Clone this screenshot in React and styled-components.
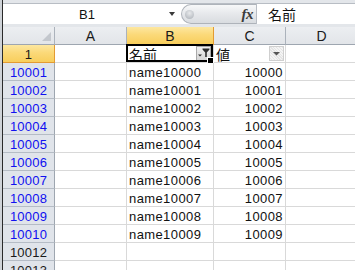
import React from 'react';
import styled, { createGlobalStyle } from 'styled-components';

const Global = createGlobalStyle`
  html, body { margin: 0; padding: 0; background: #fff; }
  body { font-family: "Liberation Sans", Arial, "Noto Sans CJK JP", sans-serif; }
`;

const Frame = styled.div`
  width: 355px;
  height: 270px;
  overflow: hidden;
  box-sizing: border-box;
  border-left: 2px solid #cfd3d8;
  display: flex;
`;

const Window = styled.div`
  flex: 1;
  min-width: 0;
  border-left: 1px solid #2a2a2a;
  display: flex;
  flex-direction: column;
  background: #fff;
`;

const FormulaBar = styled.div`
  height: 28px;
  box-sizing: border-box;
  padding: 3px 0 3px 0;
  background: #e3e6ea;
  display: flex;
`;

const NameBox = styled.div`
  width: 178px;
  box-sizing: border-box;
  background: #fff;
  border-top: 1px solid #b8bdc4;
  display: flex;
  align-items: center;
`;

const NameText = styled.div`
  flex: 1;
  text-align: center;
  font-size: 13px;
  color: #111;
  padding-left: 2px;
`;

const NameArrow = styled.div`
  width: 0;
  height: 0;
  border-left: 3.5px solid transparent;
  border-right: 3.5px solid transparent;
  border-top: 4px solid #3a3a3a;
  margin-right: 6px;
`;

const PillArea = styled.div`
  width: 75px;
  box-sizing: border-box;
  border-top: 1px solid #b8bdc4;
  background: #fff;
  display: flex;
`;

const Pill = styled.div`
  flex: 1;
  box-sizing: border-box;
  border: 1px solid #aeb3ba;
  border-right: none;
  border-radius: 11px 0 0 11px;
  background: linear-gradient(to bottom, #f7f8f9 0%, #e6e8eb 50%, #d9dce0 100%);
  display: flex;
  align-items: center;
  padding-left: 3px;
  padding-right: 3px;
`;

const Knob = styled.div`
  width: 9px;
  height: 9px;
  border-radius: 50%;
  background: radial-gradient(circle at 50% 35%, #e8eaec 0%, #c2c6cb 60%, #a9aeb5 100%);
`;

const Fx = styled.div`
  margin-left: auto;
  font-family: "Liberation Serif", "Times New Roman", serif;
  font-style: italic;
  font-weight: bold;
  font-size: 15px;
  color: #3b3b3b;
  letter-spacing: -0.5px;
  line-height: 1;
`;

const FormulaInput = styled.div`
  flex: 1;
  box-sizing: border-box;
  background: #fff;
  border-top: 1px solid #b8bdc4;
  border-left: 1px solid #b8bdc4;
  padding-left: 11px;
  display: flex;
  align-items: center;
  font-family: "Noto Sans CJK JP", "Liberation Sans", sans-serif;
  font-size: 14px;
  color: #111;
`;

const Sheet = styled.div`
  display: grid;
  grid-template-columns: 52px 72px 87px 72px 72px;
  grid-auto-rows: 18px;
`;

const Cell = styled.div`
  position: relative;
  box-sizing: border-box;
  border-right: 1px solid #d9d9d9;
  border-bottom: 1px solid #d9d9d9;
  display: flex;
  align-items: flex-end;
  justify-content: ${p => (p.$align === 'right' ? 'flex-end' : 'flex-start')};
  padding: ${p => (p.$align === 'right' ? '0 2px 0 0' : '0 0 0 2px')};
  font-size: 13px;
  line-height: 14px;
  letter-spacing: 0.4px;
  color: #111;
  white-space: nowrap;
  overflow: visible;
`;

const CjkText = styled.span`
  font-family: "Noto Sans CJK JP", "Liberation Sans", sans-serif;
  font-size: 14px;
  line-height: 16px;
  letter-spacing: 0;
`;

const ColHeader = styled.div`
  box-sizing: border-box;
  border-right: 1px solid ${p => (p.$active ? '#e39b32' : '#abb2bb')};
  border-bottom: 1px solid ${p => (p.$active ? '#e39b32' : '#9ea6b0')};
  background: ${p =>
    p.$active
      ? 'linear-gradient(to bottom, #fde7a0 0%, #fbd979 45%, #f8ce5c 100%)'
      : 'linear-gradient(to bottom, #eceef1 0%, #e2e5e9 100%)'};
  display: flex;
  align-items: flex-end;
  justify-content: center;
  font-size: 14px;
  line-height: 15px;
  color: #1a1a1a;
  position: relative;
`;

const Corner = styled(ColHeader)`
  justify-content: flex-end;
  align-items: flex-end;
  padding: 0 3px 3px 0;
`;

const RowHeader = styled.div`
  box-sizing: border-box;
  border-right: 1px solid ${p => (p.$active ? '#e39b32' : '#9ea6b0')};
  border-bottom: 1px solid ${p => (p.$active ? '#e39b32' : '#b5bcc5')};
  background: ${p =>
    p.$active
      ? 'linear-gradient(to bottom, #fde7a0 0%, #fbd979 45%, #f8ce5c 100%)'
      : '#e0e4ea'};
  display: flex;
  align-items: flex-end;
  justify-content: center;
  font-size: 13px;
  line-height: 14px;
  letter-spacing: 0.2px;
  color: ${p => (p.$filtered ? '#1010f0' : '#1a1a1a')};
`;

const Selection = styled.div`
  position: absolute;
  left: -1px;
  top: -1px;
  right: 0;
  bottom: 0;
  border: 2px solid #000;
  pointer-events: none;
`;

const FillHandle = styled.div`
  position: absolute;
  right: -2px;
  bottom: -3px;
  width: 5px;
  height: 5px;
  background: #000;
  outline: 1px solid #fff;
`;

const FilterButton = styled.div`
  position: absolute;
  top: 1px;
  right: ${p => p.$right}px;
  width: 15px;
  height: 15px;
  box-sizing: border-box;
  border: 1px solid ${p => (p.$active ? '#a9a9a9' : '#cfcfcf')};
  background: ${p =>
    p.$active
      ? 'linear-gradient(to bottom, #f0f0f0, #d6d6d6)'
      : 'repeating-linear-gradient(45deg, #f4f4f4 0 1px, #e4e4e4 1px 2px)'};
  display: flex;
  align-items: center;
  justify-content: center;
`;

const FilterArrow = () => (
  <svg width="13" height="13" viewBox="0 0 13 13">
    <polygon points="3,5 10,5 6.5,8.5" fill="#555" />
  </svg>
);

const FilterActiveIcon = () => (
  <svg width="13" height="13" viewBox="0 0 13 13">
    <polygon points="1,7.5 5,7.5 3,9.5" fill="#333" />
    <polygon points="5.5,1.5 12.5,1.5 12.5,2.5 9.8,5.5 9.8,10 8.2,10 8.2,5.5 5.5,2.5" fill="#2f2f2f" />
  </svg>
);

const CornerTriangle = () => (
  <svg width="9" height="9" viewBox="0 0 9 9">
    <polygon points="9,0 9,9 0,9" fill="#c3c7cd" />
  </svg>
);

const data = Array.from({ length: 10 }, (_, i) => ({
  row: String(10001 + i),
  name: `name${10000 + i}`,
  value: String(10000 + i),
}));

const extraRows = ['10012', '10013'];

export default function App() {
  return (
    <>
      <Global />
      <Frame>
        <Window>
          <FormulaBar>
            <NameBox>
              <NameText>B1</NameText>
              <NameArrow />
            </NameBox>
            <PillArea>
              <Pill>
                <Knob />
                <Fx>fx</Fx>
              </Pill>
            </PillArea>
            <FormulaInput>名前</FormulaInput>
          </FormulaBar>
          <Sheet>
            <Corner>
              <CornerTriangle />
            </Corner>
            <ColHeader>A</ColHeader>
            <ColHeader $active>B</ColHeader>
            <ColHeader>C</ColHeader>
            <ColHeader>D</ColHeader>

            <RowHeader $active>1</RowHeader>
            <Cell />
            <Cell>
              <CjkText>名前</CjkText>
              <FilterButton $active $right={2}>
                <FilterActiveIcon />
              </FilterButton>
              <Selection>
                <FillHandle />
              </Selection>
            </Cell>
            <Cell>
              <CjkText>値</CjkText>
              <FilterButton $right={1}>
                <FilterArrow />
              </FilterButton>
            </Cell>
            <Cell />

            {data.map(d => (
              <React.Fragment key={d.row}>
                <RowHeader $filtered>{d.row}</RowHeader>
                <Cell />
                <Cell>{d.name}</Cell>
                <Cell $align="right">{d.value}</Cell>
                <Cell />
              </React.Fragment>
            ))}

            {extraRows.map(r => (
              <React.Fragment key={r}>
                <RowHeader>{r}</RowHeader>
                <Cell />
                <Cell />
                <Cell />
                <Cell />
              </React.Fragment>
            ))}
          </Sheet>
        </Window>
      </Frame>
    </>
  );
}
